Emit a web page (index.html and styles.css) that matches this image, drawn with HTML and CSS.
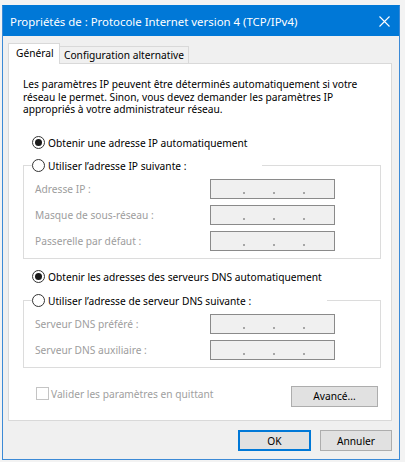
FILE: index.html
```html
<!DOCTYPE html>
<html lang="fr">
<head>
<meta charset="utf-8">
<title>Propriétés de : Protocole Internet version 4 (TCP/IPv4)</title>
<link rel="stylesheet" href="styles.css">
</head>
<body>
<div class="window">
  <div class="titlebar">
    <span class="title">Propriétés de : Protocole Internet version 4 (TCP/IPv4)</span>
    <svg class="close" width="11" height="11" viewBox="0 0 11 11"><path d="M0.5 0.5L10.5 10.5M10.5 0.5L0.5 10.5" stroke="#fff" stroke-width="1.1" fill="none"/></svg>
  </div>
  <div class="body">
    <div class="tabs">
      <div class="tab active">Général</div>
      <div class="tab">Configuration alternative</div>
    </div>
    <div class="panel">
      <p class="intro">Les paramètres IP peuvent être déterminés automatiquement si votre<br>réseau le permet. Sinon, vous devez demander les paramètres IP<br>appropriés à votre administrateur réseau.</p>

      <div class="radio-row first-radio"><span class="radio checked"></span><span>Obtenir une adresse IP automatiquement</span></div>
      <fieldset class="group group-ip">
        <legend class="radio-row"><span class="radio"></span><span>Utiliser l’adresse IP suivante :</span></legend>
        <div class="field"><span class="lbl">Adresse IP :</span><span class="ipbox"><i class="dot"></i><i class="dot"></i><i class="dot"></i></span></div>
        <div class="field"><span class="lbl">Masque de sous-réseau :</span><span class="ipbox"><i class="dot"></i><i class="dot"></i><i class="dot"></i></span></div>
        <div class="field"><span class="lbl">Passerelle par défaut :</span><span class="ipbox"><i class="dot"></i><i class="dot"></i><i class="dot"></i></span></div>
      </fieldset>

      <div class="radio-row dns-radio"><span class="radio checked"></span><span>Obtenir les adresses des serveurs DNS automatiquement</span></div>
      <fieldset class="group group-dns">
        <legend class="radio-row"><span class="radio"></span><span>Utiliser l’adresse de serveur DNS suivante :</span></legend>
        <div class="field"><span class="lbl">Serveur DNS préféré :</span><span class="ipbox"><i class="dot"></i><i class="dot"></i><i class="dot"></i></span></div>
        <div class="field"><span class="lbl">Serveur DNS auxiliaire :</span><span class="ipbox"><i class="dot"></i><i class="dot"></i><i class="dot"></i></span></div>
      </fieldset>

      <div class="bottom-row">
        <div class="check-row"><span class="checkbox"></span><span>Valider les paramètres en quittant</span></div>
        <button class="btn advanced">Avancé...</button>
      </div>
    </div>
    <div class="footer">
      <button class="btn ok">OK</button>
      <button class="btn cancel">Annuler</button>
    </div>
  </div>
</div>
</body>
</html>
```

FILE: styles.css
```css
html, body {
  margin: 0;
  padding: 0;
}
body {
  background: #f3f3f3;
  font-family: "Noto Sans", "Open Sans", sans-serif;
  font-size: 10.2px;
  color: #000;
  padding-top: 5px;
}
.window {
  margin-left: 2px;
  width: 398px;
  height: 455px;
  box-sizing: border-box;
  border: 1px solid #3c8ad6;
  border-top-color: #0078d7;
  background: #f0f0f0;
  display: flex;
  flex-direction: column;
}
.titlebar {
  height: 30px;
  flex: none;
  background: #0078d7;
  color: #fff;
  display: flex;
  align-items: center;
  justify-content: space-between;
  padding: 0 9px 0 7px;
}
.title {
  font-size: 11.4px;
  white-space: nowrap;
}
.close {
  display: block;
}
.body {
  flex: 1;
  display: flex;
  flex-direction: column;
  padding: 7px 7px 7px 5px;
}
.tabs {
  display: flex;
  align-items: flex-end;
  margin-bottom: -1px;
  position: relative;
  z-index: 1;
}
.tab {
  box-sizing: border-box;
  height: 17px;
  margin-bottom: 1px;
  border: 1px solid #d9d9d9;
  border-left: none;
  border-bottom: none;
  background: #f0f0f0;
  padding: 0 4px 1px 4px;
  display: flex;
  align-items: center;
  white-space: nowrap;
}
.tab.active {
  height: 21px;
  margin-bottom: 0;
  width: 52px;
  border-left: 1px solid #d9d9d9;
  background: #fff;
  padding: 0 0 2px 7px;
}
.panel {
  box-sizing: border-box;
  height: 358px;
  flex: none;
  background: #fff;
  border: 1px solid #d9d9d9;
  padding: 14px 10px 0 14px;
}
.intro {
  margin: 0;
  line-height: 12.5px;
}
.radio-row {
  display: flex;
  align-items: center;
  height: 14px;
  white-space: nowrap;
}
.radio {
  box-sizing: border-box;
  width: 13px;
  height: 13px;
  border: 1px solid #333;
  border-radius: 50%;
  margin-right: 3px;
  background: #fff;
  flex: none;
}
.radio.checked::after {
  content: "";
  display: block;
  width: 7px;
  height: 7px;
  margin: 2px;
  border-radius: 50%;
  background: #1a1a1a;
}
.first-radio {
  margin-top: 20px;
  padding-left: 9px;
}
.dns-radio {
  margin-top: 11px;
  padding-left: 9px;
}
.group {
  margin: 9px 0 0 0;
  padding: 6px 0 7px 0;
  border: 1px solid #dcdcdc;
  min-width: 0;
}
.group-dns {
  margin-top: 10px;
}
.group legend {
  padding: 0 76px 0 0;
  margin-left: 8px;
  background: #fff;
}
.field {
  display: flex;
  align-items: center;
  height: 20px;
  margin-left: 11px;
}
.field + .field {
  margin-top: 6px;
}
.lbl {
  width: 175px;
  color: #9d9d9d;
  white-space: nowrap;
}
.ipbox {
  box-sizing: border-box;
  width: 125px;
  height: 20px;
  border: 1px solid #8a8a8a;
  background: #f0f0f0;
  display: flex;
  align-items: flex-end;
  padding: 0 0 4px 32px;
  gap: 28px;
}
.dot {
  display: block;
  width: 2px;
  height: 2px;
  background: #a6a6a6;
}
.bottom-row {
  display: flex;
  justify-content: space-between;
  align-items: flex-start;
  margin-top: 18px;
  padding-right: 3px;
}
.check-row {
  display: flex;
  align-items: center;
  margin-left: 13px;
  margin-top: 1px;
  color: #a0a0a0;
  white-space: nowrap;
}
.checkbox {
  box-sizing: border-box;
  width: 13px;
  height: 13px;
  border: 1px solid #c4c4c4;
  background: #fff;
  margin-right: 2px;
}
.btn {
  box-sizing: border-box;
  height: 21px;
  border: 1px solid #adadad;
  background: #e1e1e1;
  font-family: inherit;
  font-size: inherit;
  color: #000;
  padding: 0;
  margin: 0;
}
.advanced {
  width: 87px;
}
.footer {
  display: flex;
  justify-content: flex-end;
  gap: 9px;
  margin-top: 9px;
}
.ok {
  width: 73px;
  border: 2px solid #0078d7;
}
.cancel {
  width: 72px;
}
```
